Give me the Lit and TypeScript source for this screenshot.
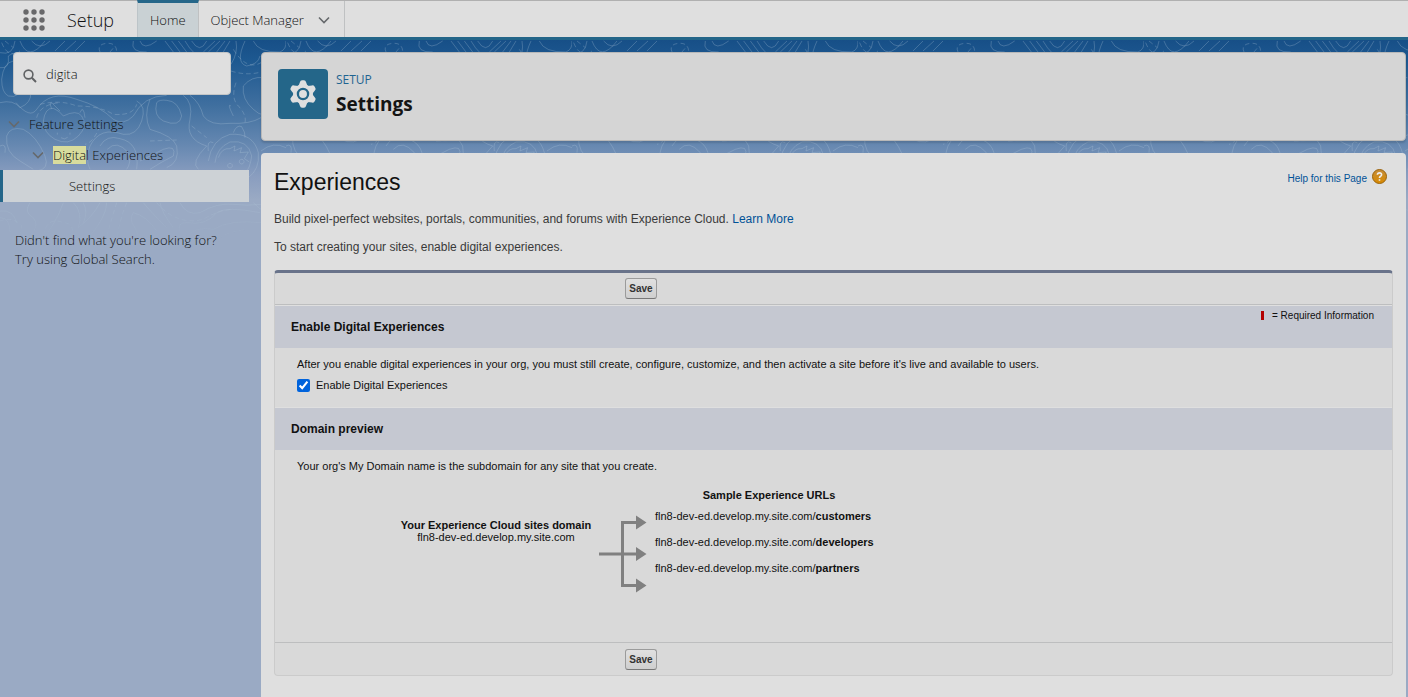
import { LitElement, html, css, svg } from "lit";
import { customElement, state } from "lit/decorators.js";

const CONTOURS = [
  "M0 50Q40 60 45 15", "M60 15Q85 80 135 15", "M95 15Q120 45 150 15M165 45L195 15M195 45L228 15M225 45L255 15",
  "M0 95Q30 100 25 60Q45 45 60 55Q80 95 70 140Q60 190 25 180Q5 170 5 130Q10 80 40 75",
  "M0 200Q40 190 60 215Q95 200 92 170", "M48 200Q90 250 110 220Q150 160 230 190Q300 210 340 250Q370 270 400 240Q430 180 500 178",
  "M20 300Q30 270 70 280Q110 300 135 360Q150 400 110 405M20 300Q15 350 60 375L100 400",
  "M470 200Q460 240 490 255Q540 275 545 240Q535 195 500 193Q478 190 470 200Z",
  "M410 195Q440 210 425 255Q410 300 370 295Q300 270 270 330Q255 370 270 400",
  "M300 330Q320 295 360 308Q420 320 410 400M322 340Q350 310 385 350Q395 380 380 400",
  "M450 190Q430 240 450 280Q520 300 530 330Q540 380 500 395M550 178Q580 200 570 250Q555 310 620 330Q570 380 595 400",
  "M570 178Q600 200 610 240Q630 270 690 262Q750 265 783 245",
  "M420 375Q450 360 490 340Q530 325 520 360Q480 380 450 400",
  "M130 255Q135 215 160 217Q180 225 190 240Q230 220 245 240Q265 270 235 300Q205 330 165 310Q130 290 130 255ZM155 218Q145 195 158 203L180 225M240 230Q250 205 255 245",
  "M172 290v6M210 290v6M183 305q10 8 20 -1",
  "M625 375Q635 310 690 295Q760 290 775 350Q780 400 745 425M645 380Q650 335 690 318Q745 310 755 360Q750 400 735 410M625 345Q620 310 640 320M700 290Q710 265 725 272Q737 290 735 305",
  "M655 365Q665 335 690 338L705 330L702 345L725 335L720 350L745 348L733 368L748 378M690 382a7 7 0 1 0 .1 0M725 370a7 7 0 1 0 .1 0",
  "M400 15Q390 50 440 48M420 15Q430 45 470 15M520 48L495 15M540 48L515 15M560 48L535 15M580 48Q570 40 555 15M575 15Q600 55 620 15M610 48L645 15M625 48L660 15M650 48L675 15M670 48L690 15",
  "M693 85Q715 50 708 15M735 15Q705 80 740 90Q775 85 780 60M760 15Q775 50 840 48Q860 40 858 15",
  "M693 210Q680 200 700 240M730 150Q755 120 790 125M730 150Q725 190 760 220Q790 250 830 230Q860 190 858 130",
  "M0 525Q40 520 50 560M0 545Q30 545 30 590M90 500Q70 530 100 545Q120 570 90 600M220 500Q250 530 235 575Q280 540 300 500M250 500Q265 530 250 560M320 500Q320 540 270 600",
  "M470 585Q440 540 400 530Q385 550 405 575Q420 600 410 625M500 575Q450 525 430 500M520 575Q485 530 480 500M540 585Q530 560 560 560Q620 570 650 530Q680 510 780 530M560 600Q590 570 640 580Q690 550 783 560",
  "M540 500Q560 540 600 530Q650 500 700 505Q740 510 783 505M120 620Q170 560 190 500M760 500Q790 540 858 525",
  "M783 300Q820 280 858 300M783 345Q820 315 858 335M790 400Q820 370 858 380M0 330Q20 320 15 350",
];
const DASHED = [
  "M5 20Q25 70 60 45M15 15L40 35", "M300 48Q290 25 320 22Q350 20 350 48M330 48L345 30", "M120 205Q180 190 230 210Q300 210 340 235Q400 240 410 205",
  "M110 245Q120 205 180 200M300 270Q280 320 255 325M693 105Q740 120 783 108M708 140Q690 190 720 215Q740 240 735 260",
  "M130 600Q140 540 190 560Q230 560 215 625M20 625Q60 620 65 570Q40 540 0 555M350 500L320 600M380 500Q355 560 350 625",
  "M470 500Q530 570 610 550Q660 520 700 520M430 625Q500 590 560 625M575 270L620 305M700 40Q740 105 783 80M450 315L530 312M640 625Q660 590 740 580",
];

const chevron = html`<svg class="chev" viewBox="0 0 12 8" aria-hidden="true"><path d="M1 1.5 6 6.5 11 1.5" fill="none" stroke="currentColor" stroke-width="1.6"/></svg>`;

@customElement("contour-backdrop")
class ContourBackdrop extends LitElement {
  static styles = css`
    :host { display: block; position: absolute; inset: 0; z-index: -1;
      background: linear-gradient(#174f87 0, #1d5890 20px, #3f6f9f 65px, #6688b1 105px, #899dbf 135px, #9aaac4 160px, #9aaac4 100%); }
    svg { display: block; width: 100%; height: 204px; }
  `;
  render() {
    return html`<svg aria-hidden="true">
      <defs>
        <linearGradient id="fade" x2="0" y2="1"><stop offset=".75" stop-color="#fff"/><stop offset="1" stop-color="#fff" stop-opacity="0"/></linearGradient>
        <mask id="mask"><rect width="100%" height="204" fill="url(#fade)"/></mask>
        <pattern id="topo" width="286" height="204" patternUnits="userSpaceOnUse">
          <g transform="translate(0 -4) scale(.33333)" fill="none" stroke="#b4c8dc" stroke-opacity=".28" stroke-width="3">
            ${CONTOURS.map((d) => svg`<path d=${d}/>`)}
            ${DASHED.map((d) => svg`<path d=${d} stroke-dasharray="14 9"/>`)}
          </g>
        </pattern>
      </defs>
      <rect width="100%" height="204" fill="url(#topo)" mask="url(#mask)"/>
    </svg>`;
  }
}

@customElement("app-root")
class AppRoot extends LitElement {
  @state() enabled = true;

  static styles = css`
    :host { display: flex; flex-direction: column; min-height: 100vh; font: 300 13px/20px "Open Sans", "Noto Sans", sans-serif; color: #101112; }
    * { box-sizing: border-box; }
    h1, h2, h3, p, ul { margin: 0; padding: 0; }
    a { text-decoration: none; color: #015297; }
    .top { display: flex; height: 40px; background: #dfdfdf; border-top: 1px solid #b0b0b0; border-bottom: 3px solid #246689; }
    .waffle { border: 0; padding: 0; background: none; margin: 8px 22px 0 23px; width: 22px; height: 22px; }
    .waffle svg { display: block; }
    .app { font-size: 18px; line-height: 38px; width: 70px; }
    .tab { display: flex; align-items: center; gap: 14px; color: inherit; padding: 2px 14px 0 12px; border-right: 1px solid #bfc1c2; }
    .tab.on { background: #c9d1d4; border-top: 3px solid #246689; border-left: 1px solid #bcc4c8; margin-top: -1px; padding: 0 12px; }
    .chev { width: 12px; height: 8px; color: #66696c; flex: none; }
    .main { flex: 1; display: flex; position: relative; z-index: 0; }
    .side { width: 261px; flex: none; padding-top: 12px; }
    .find { display: flex; align-items: center; gap: 9px; margin: 0 30px 0 13px; height: 43px; padding: 0 9px; background: #dfdfdf; border: 1px solid #c3c5c6; border-radius: 4px; }
    .find svg { flex: none; margin-top: 4px; }
    .find input { min-width: 0; flex: 1; border: 0; outline: 0; background: none; padding: 0; font: inherit; color: inherit; }
    .tree { list-style: none; margin-top: 13px; }
    .tree .row { display: flex; align-items: center; gap: 9px; height: 31px; padding-left: 8px; }
    .tree .sub { padding-left: 32px; }
    .tree a { color: inherit; }
    .tree .leaf { display: block; margin-right: 12px; padding-left: 66px; border-left: 3px solid #246689; background: #cdd2d6; line-height: 32px; }
    mark { background: #d8dc9d; color: inherit; }
    .hint { margin: 29px 15px; line-height: 19px; }
    .content { flex: 1; min-width: 0; display: flex; flex-direction: column; gap: 12px; padding: 12px 2px 0 0; }
    .head { display: flex; gap: 8px; height: 89px; padding: 16px; background: #d5d5d5; border: 1px solid #b8b8b8; border-radius: 4px; box-shadow: 0 2px 2px #0002; }
    .badge { width: 50px; height: 50px; border-radius: 4px; background: #246689; display: grid; place-items: center; }
    .eyebrow { font-size: 12px; font-weight: 400; line-height: 22px; color: #1f6491; }
    .head h1 { font: 700 19px/26px "Open Sans", sans-serif; color: #141414; }
    .page { flex: 1; background: #dfdfdf; border-radius: 4px 4px 0 0; padding: 14px 13px 21px 13px; font: 400 12px/16px "Liberation Sans", Arial, sans-serif; color: #3a3a3a; }
    .title { display: flex; justify-content: space-between; }
    .title h2 { font-weight: 400; font-size: 23px; line-height: 30px; color: #111; }
    .help { display: flex; align-items: flex-start; gap: 5px; padding-top: 2px; margin-right: 6px; font-size: 10px; line-height: 20px; }
    .intro { display: grid; gap: 12px; margin-top: 14px; }
    .panel { margin-top: 15px; background: #d9d9d9; border: 1px solid #cbcbcb; border-top: 3px solid #69738a; border-radius: 4px; font-size: 11px; line-height: 14px; color: #111; }
    .bar { padding: 5px 0 5px 350px; border-bottom: 1px solid #bdbebf; height: 32px; }
    .bar.foot { border: 0; border-top: 1px solid #bdbebf; padding-top: 6px; height: 33px; }
    .save { display: block; font: 700 10px/12px "Liberation Sans", Arial, sans-serif; width: 32px; height: 21px; padding: 0; color: #333; border: 1px solid #9b9b9b; border-bottom-color: #777; border-radius: 3px; background: linear-gradient(#e0e0e0, #cfcfcf); }
    .band { display: flex; justify-content: space-between; height: 43px; padding: 0 18px 0 16px; background: #c5c8d1; border-top: 1px solid #dfdfdf; }
    .band h3 { font-size: 12px; line-height: 42px; }
    .req { font-size: 10px; line-height: 20px; }
    .req::before { content: ""; display: inline-block; width: 3px; height: 9px; margin-right: 8px; background: #b30000; vertical-align: -1px; }
    .body { padding: 9px 22px; }
    .check { display: flex; align-items: center; gap: 6px; margin-top: 6px; }
    .check input { width: 13px; height: 13px; margin: 2px 0 0; accent-color: #0063dc; }
    .b1 { height: 59px; }
    .b2 { min-height: 192px; }
    .map { display: flex; margin: 15px 0 0 101px; }
    .domain { width: 196px; text-align: center; line-height: 12px; padding-top: 31px; }
    .fork { margin: 27px 8px 0 5px; }
    .samples { width: 228px; }
    .urls { display: grid; gap: 12px; list-style: none; margin-top: 7px; }
    .urls-title { text-align: center; }
  `;

  render() {
    return html`
      <header class="top">
        <button class="waffle" aria-label="App Launcher"><svg width="22" height="22" fill="#68686a">
          ${[3, 11, 19].map((y) => [3, 11, 19].map((x) => svg`<circle cx=${x} cy=${y} r="2.7"/>`))}
        </svg></button>
        <span class="app">Setup</span>
        <a class="tab on" href="#home">Home</a>
        <a class="tab" href="#objects">Object Manager ${chevron}</a>
      </header>
      <div class="main">
        <contour-backdrop></contour-backdrop>
        <nav class="side">
          <label class="find">
            <svg width="14" height="14" viewBox="0 0 14 14" fill="none" stroke="#606264" stroke-width="1.6" aria-hidden="true"><circle cx="5.5" cy="5.5" r="4.4"/><path d="m8.8 8.8 4.2 4.2" stroke-width="2"/></svg>
            <input type="text" aria-label="Quick Find" .value=${"digita"}>
          </label>
          <ul class="tree">
            <li class="row">${chevron}<a href="#features">Feature Settings</a></li>
            <li class="row sub">${chevron}<a href="#digital"><mark>Digita</mark>l Experiences</a></li>
            <li><a class="leaf" href="#settings">Settings</a></li>
          </ul>
          <p class="hint">Didn't find what you're looking for?<br>Try using Global Search.</p>
        </nav>
        <main class="content">
          <section class="head">
            <div class="badge"><svg width="28" height="28" viewBox="-14 -14 28 28" aria-hidden="true">
              <g fill="#dfdfdf"><circle r="10"/>${[0, 60, 120, 180, 240, 300].map((a) => svg`<path transform="rotate(${a})" d="M-4.5-8-3-12Q-2.6-13.7-1-13.7H1Q2.6-13.7 3-12L4.5-8Z"/>`)}</g>
              <circle r="5.1" fill="none" stroke="#246689" stroke-width="2.3"/>
            </svg></div>
            <div><div class="eyebrow">SETUP</div><h1>Settings</h1></div>
          </section>
          <section class="page">
            <div class="title"><h2>Experiences</h2>
              <a class="help" href="#help"><span>Help for this Page</span>
                <svg width="15" height="15" viewBox="0 0 15 15" aria-hidden="true">
                  <defs><linearGradient id="o" x2="0" y2="1"><stop stop-color="#c58d3a"/><stop offset="1" stop-color="#d98a00"/></linearGradient></defs>
                  <circle cx="7.5" cy="7.5" r="7" fill="url(#o)" stroke="#9a630c"/><path d="M5.4 5.8Q5.5 3.9 7.5 3.9T9.6 5.7Q9.6 6.7 8.5 7.3 7.5 7.8 7.5 9M7.5 10.2v1.6" fill="none" stroke="#eee" stroke-width="1.6"/>
                </svg></a>
            </div>
            <div class="intro">
              <p>Build pixel-perfect websites, portals, communities, and forums with Experience Cloud. <a href="#learn">Learn More</a></p>
              <p>To start creating your sites, enable digital experiences.</p>
            </div>
            <form class="panel" @submit=${(e: Event) => e.preventDefault()}>
              <div class="bar"><button class="save">Save</button></div>
              <div class="band"><h3>Enable Digital Experiences</h3><span class="req">= Required Information</span></div>
              <div class="body b1">
                <p>After you enable digital experiences in your org, you must still create, configure, customize, and then activate a site before it's live and available to users.</p>
                <label class="check"><input type="checkbox" .checked=${this.enabled} @change=${(e: Event) => (this.enabled = (e.target as HTMLInputElement).checked)}>Enable Digital Experiences</label>
              </div>
              <div class="band"><h3>Domain preview</h3></div>
              <div class="body b2">
                <p>Your org's My Domain name is the subdomain for any site that you create.</p>
                <div class="map">
                  <div class="domain"><b>Your Experience Cloud sites domain</b><br>fln8-dev-ed.develop.my.site.com</div>
                  <svg class="fork" width="48" height="78" fill="#808080" aria-hidden="true">
                    <path d="M0 37.5H39V40.500H0ZM22 6H39V9H25V69H39V72H22ZM37 .5 47.500 7.500 37 14.5ZM37 32 47.500 39 37 46ZM37 63.500 47.500 70.500 37 77.500Z"/>
                  </svg>
                  <div class="samples">
                    <div class="urls-title"><b>Sample Experience URLs</b></div>
                    <ul class="urls">
                      ${["customers", "developers", "partners"].map((n) => html`<li>fln8-dev-ed.develop.my.site.com/<b>${n}</b></li>`)}
                    </ul>
                  </div>
                </div>
              </div>
              <div class="bar foot"><button class="save">Save</button></div>
            </form>
          </section>
        </main>
      </div>`;
  }
}
